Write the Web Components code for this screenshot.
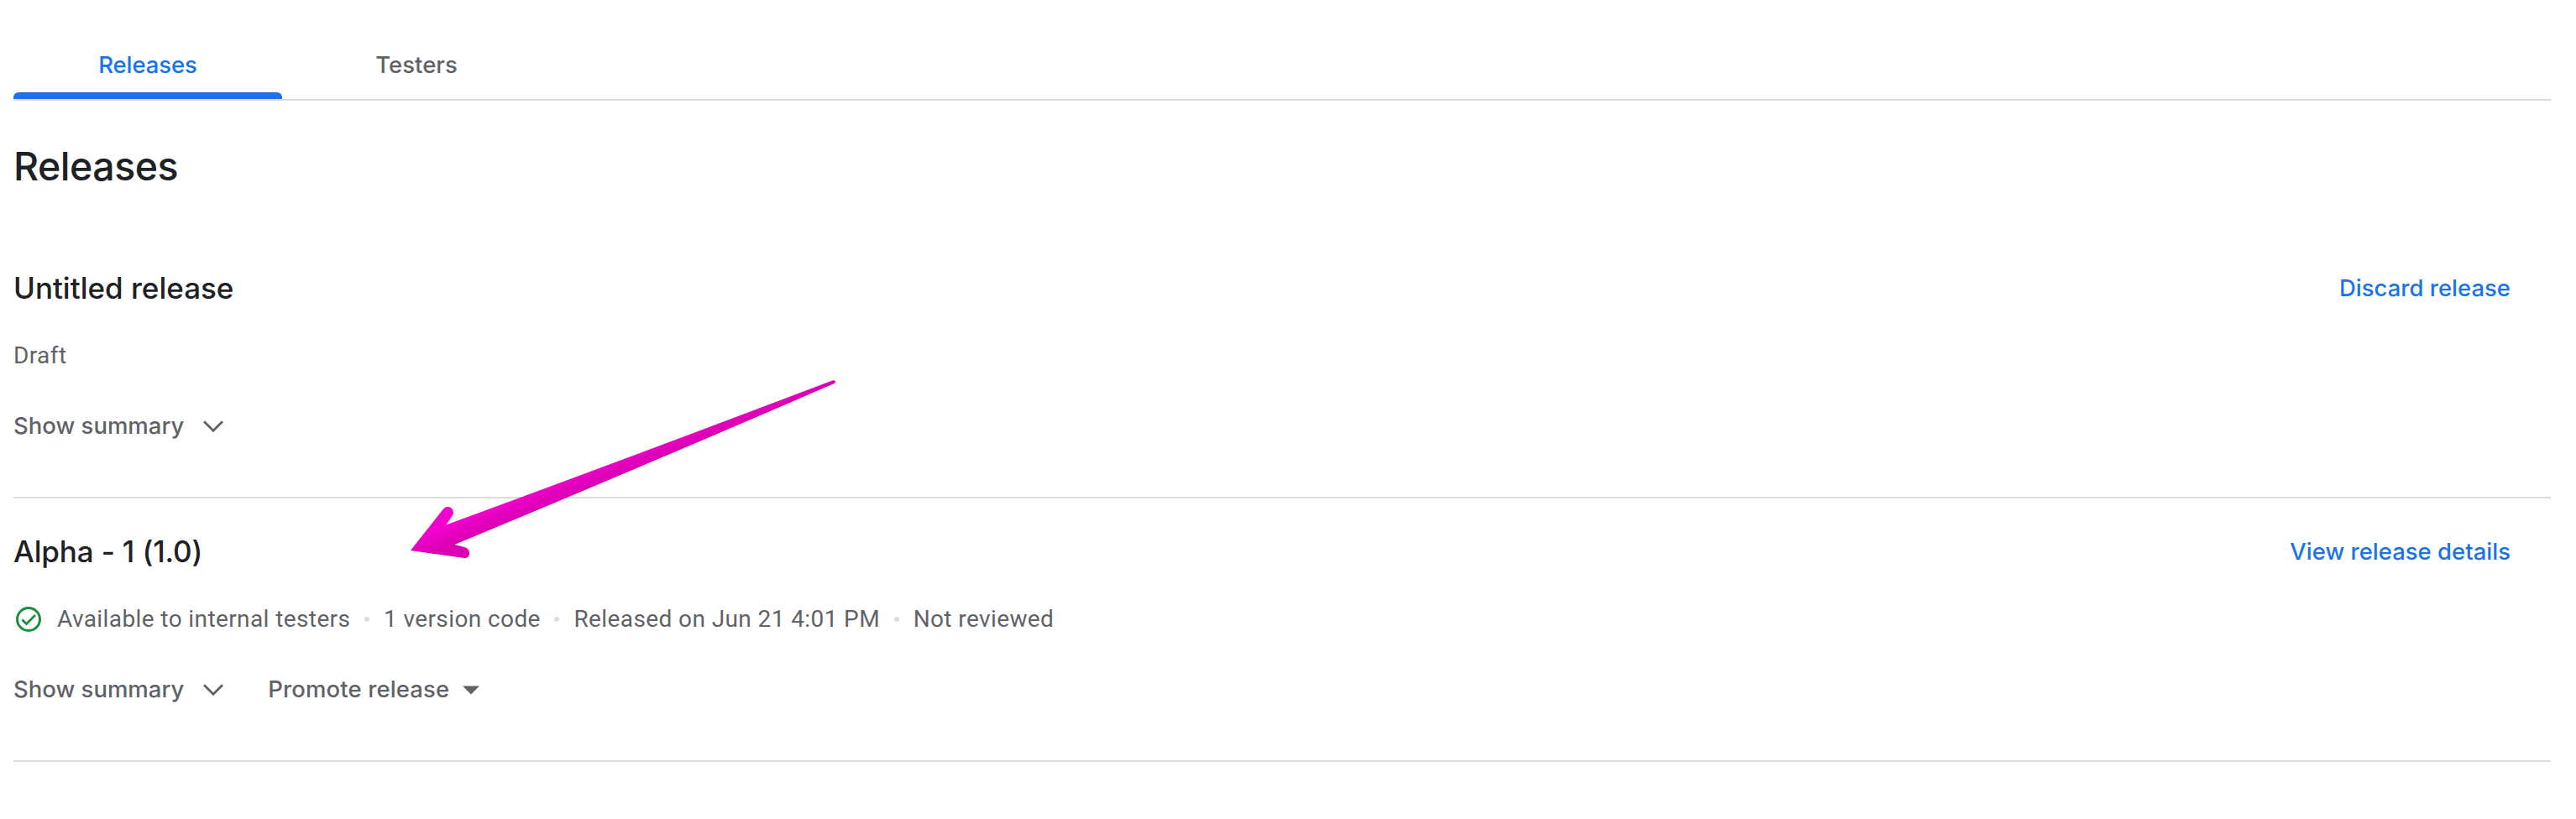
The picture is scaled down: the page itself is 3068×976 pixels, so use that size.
<!DOCTYPE html>
<html lang="en">
<head>
<meta charset="utf-8">
<title>Releases</title>
<style>
html,body{margin:0;background:#fff}
body{height:976px;overflow:hidden;font-family:Inter,"Liberation Sans",sans-serif;color:#202124}
</style>
</head>
<body>
<release-page>
  <tab-bar>
    <tab-item selected>Releases</tab-item>
    <tab-item>Testers</tab-item>
  </tab-bar>
  <page-title>Releases</page-title>
  <release-card>
    <span slot="title">Untitled release</span>
    <text-link slot="link">Discard release</text-link>
    <status-line slot="status"><status-text>Draft</status-text></status-line>
    <action-button slot="actions" icon="chevron">Show summary</action-button>
  </release-card>
  <release-card>
    <span slot="title" style="letter-spacing:-.15px">Alpha - 1 (1.0)</span>
    <text-link slot="link">View release details</text-link>
    <status-line slot="status"><check-icon></check-icon><status-text>Available to internal testers</status-text><status-text dot>1 version code</status-text><status-text dot>Released on Jun 21 4:01 PM</status-text><status-text dot>Not reviewed</status-text></status-line>
    <action-button slot="actions" icon="chevron">Show summary</action-button>
    <action-button slot="actions" icon="caret">Promote release</action-button>
  </release-card>
  <pointer-arrow slot="overlay"></pointer-arrow>
</release-page>
<script>
function define(name, html) {
  const template = document.createElement('template');
  template.innerHTML = html;
  customElements.define(name, class extends HTMLElement {
    constructor() {
      super();
      this.attachShadow({mode: 'open'}).append(template.content.cloneNode(true));
    }
  });
}

define('release-page', `<style>
:host{display:block;position:relative;height:976px}
main{display:flex;flex-direction:column;padding:0 30px 0 16px}
</style><main><slot></slot></main><slot name="overlay"></slot>`);

define('tab-bar', `<style>
:host{display:flex;height:118px;border-bottom:2px solid #dadce0}
</style><slot></slot>`);

define('tab-item', `<style>
:host{display:flex;flex-direction:column;width:320px;height:118px;color:#5f6368;font-size:27.5px;font-weight:500;line-height:32px;text-align:center}
:host([selected]){color:#1a73e8;letter-spacing:-.1px}
.label{margin-top:61px;flex:1}
.bar{height:8px;border-radius:6px 6px 0 0}
:host([selected]) .bar{background:#1a73e8}
</style><div class="label"><slot></slot></div><div class="bar"></div>`);

define('page-title', `<style>
:host{display:block;padding:54px 0 58px}
h1{margin:0;font-size:46.5px;font-weight:500;line-height:48px;letter-spacing:-.5px}
</style><h1><slot></slot></h1>`);

define('release-card', `<style>
:host{display:flex;flex-direction:column;box-sizing:border-box;height:314px;padding-top:39px;border-bottom:2px solid #dadce0}
header{display:flex;justify-content:space-between;align-items:center;height:48px;padding-right:48px}
h2{margin:0;font-size:35px;font-weight:500;line-height:48px}
.status{margin-top:37px}
.actions{display:flex;gap:47px;margin-top:43px}
</style><header><h2><slot name="title"></slot></h2><slot name="link"></slot></header>
<div class="status"><slot name="status"></slot></div>
<div class="actions"><slot name="actions"></slot></div>`);

define('text-link', `<style>
:host{display:block;color:#1a73e8;font-size:27.5px;font-weight:500;line-height:48px}
</style><slot></slot>`);

define('status-line', `<style>
:host{display:flex;align-items:center;height:40px;color:#5f6368;font:400 28px/40px Roboto,"Liberation Sans",sans-serif;letter-spacing:.4px}
</style><slot></slot>`);

define('status-text', `<style>
:host{display:flex;align-items:center;white-space:pre}
i{display:none;width:6px;height:6px;margin:0 17px 0 16.6px;border-radius:50%;background:#dadce0}
:host([dot]) i{display:block}
</style><i></i><slot></slot>`);

define('check-icon', `<style>
:host{display:block;width:36px;height:36px;margin:0 16px 0 0}
svg{display:block}
</style><svg width="36" height="36" viewBox="0 0 36 36" fill="none" stroke="#1e8e3e" stroke-width="3"><circle cx="18" cy="18" r="13.5"/><path d="M10.4 18.4l5.1 5.1L26 13" stroke-width="2.8"/></svg>`);

const icons = {
  chevron: '<svg width="36" height="36" viewBox="0 0 36 36"><path d="M7 13.2L18 24.2L29 13.2" fill="none" stroke="#5f6368" stroke-width="2.8"/></svg>',
  caret: '<svg width="20" height="36" viewBox="0 0 20 36"><path d="M0 14.500H20L10 24.500Z" fill="#5f6368"/></svg>'
};
customElements.define('action-button', class extends HTMLElement {
  constructor() {
    super();
    const kind = this.getAttribute('icon');
    this.attachShadow({mode: 'open'}).innerHTML = `<style>
:host{display:flex;align-items:center;gap:17px;height:40px;color:#5f6368;font-size:27.5px;font-weight:500;line-height:40px;white-space:nowrap}
:host([icon="caret"]){gap:15.5px;letter-spacing:.12px}
svg{display:block}
</style><slot></slot>${icons[kind]}`;
  }
});

define('pointer-arrow', `<style>
:host{display:block;position:absolute;left:480px;top:440px;width:530px;height:240px}
svg{display:block}
</style><svg width="530" height="240" viewBox="480 440 530 240">
<defs><linearGradient id="g" gradientUnits="userSpaceOnUse" x1="603" y1="598" x2="611" y2="617">
<stop offset="0" stop-color="#f200cc"/><stop offset="1" stop-color="#db00b4"/></linearGradient></defs>
<path fill="url(#g)" d="M489 656L528 606.500C532.500 601 541 605 539.800 612Q539.500 614 531.300 625.500Q769 538 992 453.300C995 452.500 996 456 993.500 457Q770 554 541.500 649L554 652.300C561.500 655 560.500 665.500 553 665Z"/></svg>`);
</script>
</body>
</html>
